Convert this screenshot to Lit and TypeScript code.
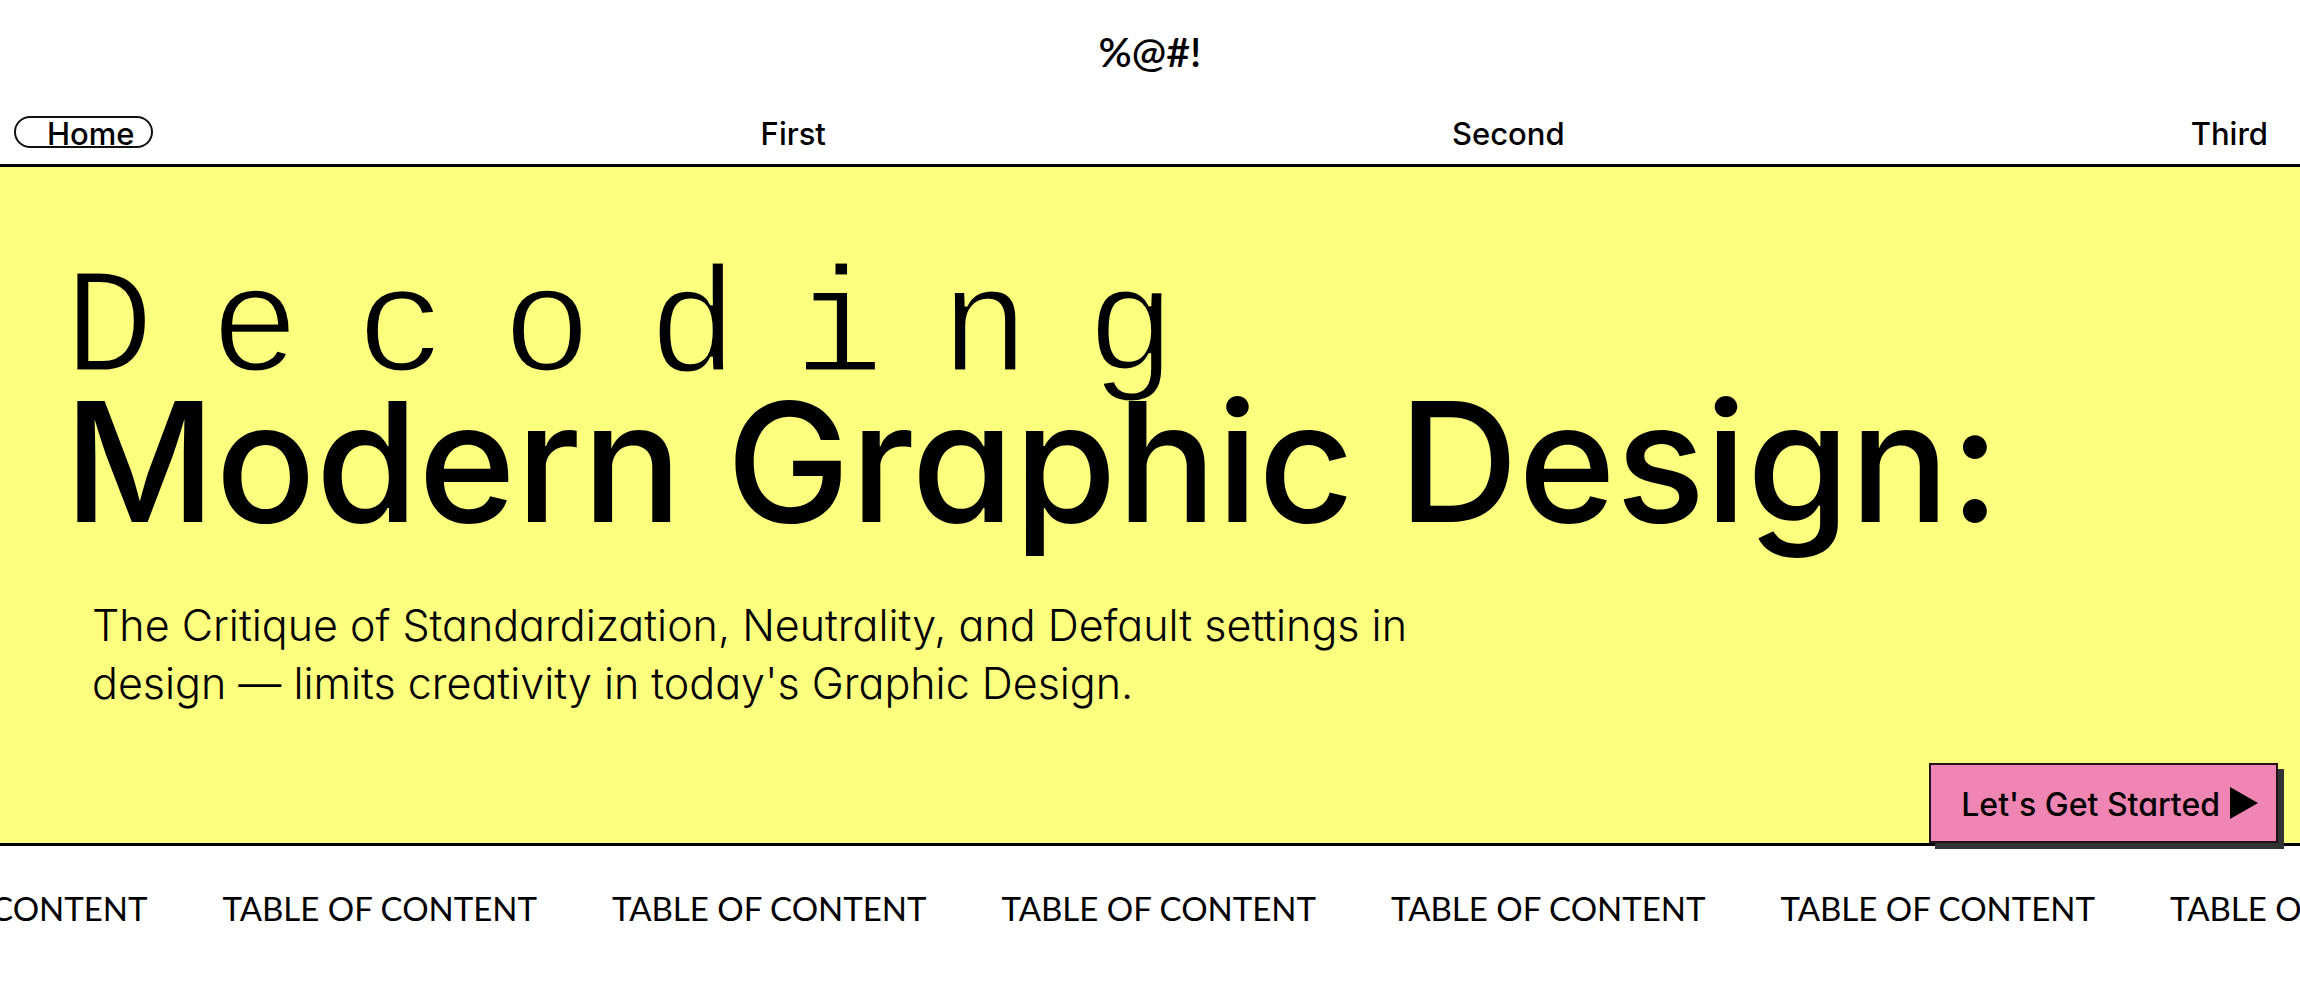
import { LitElement, html, css } from "lit";
import { customElement, state } from "lit/decorators.js";
import { classMap } from "lit/directives/class-map.js";

const LINKS = ["Home", "First", "Second", "Third"];
const TICKER_COUNT = 7;

@customElement("site-header")
class SiteHeader extends LitElement {
  @state() private current = "Home";

  static styles = css`
    :host {
      display: block;
      background: #fff;
      border-bottom: 3px solid #000;
    }
    .logo {
      display: block;
      padding-top: 27px;
      font-family: Lato, sans-serif;
      font-size: 41px;
      font-weight: 600;
      line-height: 50px;
      text-align: center;
      color: inherit;
      text-decoration: none;
    }
    .nav {
      display: flex;
      justify-content: space-between;
      padding: 39px 14px 16px;
    }
    .link {
      box-sizing: border-box;
      height: 32px;
      padding: 0 16px 0 31px;
      border: 2px solid transparent;
      border-radius: 16px;
      font-size: 31px;
      font-weight: 500;
      line-height: 32px;
      color: inherit;
      text-decoration: none;
    }
    .current {
      border-color: #111;
    }
  `;

  private select(event: Event, name: string) {
    event.preventDefault();
    this.current = name;
  }

  render() {
    return html`
      <a class="logo" href="#top">%@#!</a>
      <nav class="nav">
        ${LINKS.map(
          (name) => html`<a
            class=${classMap({ link: true, current: name === this.current })}
            href="#${name.toLowerCase()}"
            @click=${(e: Event) => this.select(e, name)}
            >${name}</a
          >`
        )}
      </nav>
    `;
  }
}

@customElement("site-hero")
class SiteHero extends LitElement {
  static styles = css`
    :host {
      display: flex;
      flex-direction: column;
      background: #fcff7d;
      border-bottom: 3px solid #000;
      padding-top: 108px;
    }
    .title {
      margin: 0;
      padding-left: 64px;
      font-weight: 500;
    }
    .kicker,
    .main {
      display: block;
      white-space: nowrap;
    }
    .kicker {
      font-family: "Liberation Mono", monospace;
      font-size: 150px;
      font-weight: 400;
      line-height: 112px;
      letter-spacing: 56px;
      -webkit-text-stroke: 3px #fcff7d;
    }
    .main {
      font-size: 166px;
      line-height: 149px;
    }
    .lead {
      max-width: 1360px;
      margin: 60px 0 0;
      padding-left: 92px;
      font-size: 43px;
      font-weight: 350;
      line-height: 58px;
    }
    .start {
      align-self: flex-end;
      display: flex;
      align-items: center;
      gap: 10px;
      height: 80px;
      margin: 51px 22px 0 0;
      padding: 2px 18px 0 30px;
      border: 2px solid #231018;
      background: #ef85b2;
      box-shadow: 6px 6px 0 #333;
      font: inherit;
      font-size: 32px;
      font-weight: 500;
      color: inherit;
      cursor: pointer;
    }
    .play {
      width: 28px;
      height: 32px;
      margin-bottom: 2px;
    }
  `;

  render() {
    return html`
      <h1 class="title">
        <span class="kicker">Decoding</span>
        <span class="main">Modern Graphic Design:</span>
      </h1>
      <p class="lead">
        The Critique of Standardization, Neutrality, and Default settings in
        design — limits creativity in today's Graphic Design.
      </p>
      <button class="start" type="button">
        Let's Get Started
        <svg class="play" viewBox="0 0 28 32" aria-hidden="true">
          <path d="M0 0 28 16 0 32Z" />
        </svg>
      </button>
    `;
  }
}

@customElement("content-ticker")
class ContentTicker extends LitElement {
  static styles = css`
    :host {
      display: block;
      overflow: hidden;
      padding: 42px 0;
    }
    .track {
      display: flex;
      gap: 75px;
      margin-left: -167px;
      font-family: Lato, sans-serif;
      font-size: 33px;
      line-height: 40px;
      white-space: nowrap;
    }
    .item {
      flex: none;
    }
  `;

  render() {
    return html`
      <div class="track">
        ${Array.from(
          { length: TICKER_COUNT },
          () => html`<span class="item">TABLE OF CONTENT</span>`
        )}
      </div>
    `;
  }
}

@customElement("app-root")
class AppRoot extends LitElement {
  static styles = css`
    :host {
      display: block;
      color: #000;
      background: #fff;
      font-family: Inter, Lato, sans-serif;
      font-feature-settings: "cv11";
    }
  `;

  render() {
    return html`
      <site-header></site-header>
      <main><site-hero></site-hero></main>
      <content-ticker></content-ticker>
    `;
  }
}
